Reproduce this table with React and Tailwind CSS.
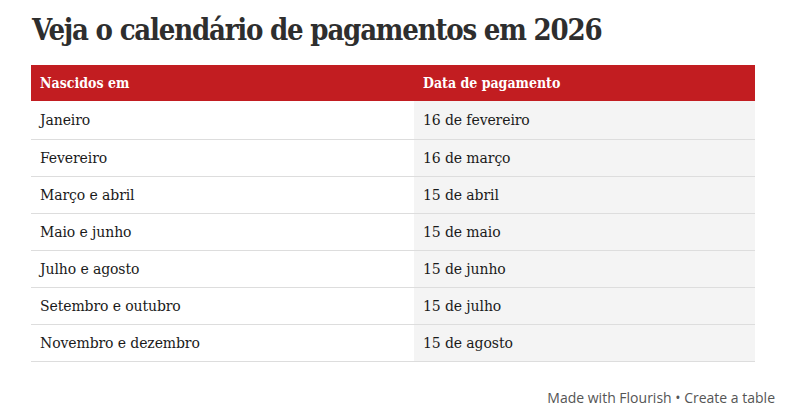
import React from "react";

const rows = [
  ["Janeiro", "16 de fevereiro"],
  ["Fevereiro", "16 de março"],
  ["Março e abril", "15 de abril"],
  ["Maio e junho", "15 de maio"],
  ["Julho e agosto", "15 de junho"],
  ["Setembro e outubro", "15 de julho"],
  ["Novembro e dezembro", "15 de agosto"],
];

export default function App() {
  return (
    <div className="w-[794px] h-[415px] bg-white flex flex-col" style={{ fontFamily: '"DejaVu Serif", "Liberation Serif", serif' }}>
      <h1 className="pl-[32px] pt-[10px] h-[65px] text-[29px] font-bold text-[#2e2e2e] tracking-[-1.2px] leading-[40px]" style={{ fontFamily: '"DejaVu Serif Condensed", "DejaVu Serif", serif' }}>
        Veja o calendário de pagamentos em 2026
      </h1>
      <div className="mx-[31px] w-[724px]">
        <div className="grid grid-cols-[383px_341px] h-[36px] bg-[#c21d21] text-white text-[14px] font-bold items-center" style={{ fontFamily: '"DejaVu Serif Condensed", "DejaVu Serif", serif' }}>
          <div className="pl-[9px]">Nascidos em</div>
          <div className="pl-[9px]">Data de pagamento</div>
        </div>
        {rows.map(([a, b], i) => (
          <div key={i} className={`grid grid-cols-[383px_341px] border-b border-[#dddddd] text-[14px] text-[#1a1a1a] tracking-[-0.1px] ${i === 0 ? "h-[39px]" : "h-[37px]"}`}>
            <div className="pl-[9px] flex items-center">{a}</div>
            <div className="pl-[9px] flex items-center bg-[#f4f4f4]">{b}</div>
          </div>
        ))}
      </div>
      <div className="flex-1 flex items-end justify-end pr-[19px] pb-[7px] text-[14px] text-[#555555]" style={{ fontFamily: '"Open Sans", "Liberation Sans", sans-serif' }}>
        Made with Flourish • Create a table
      </div>
    </div>
  );
}
